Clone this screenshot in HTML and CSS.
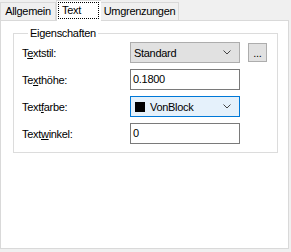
FILE: index.html
```html
<!DOCTYPE html>
<html lang="de">
<head>
    <meta charset="UTF-8">
    <title>Text Eigenschaften</title>
    <link rel="stylesheet" href="styles.css">
</head>
<body>
    <div class="tabs">
        <div class="tab tab-general">Allgemein</div>
        <div class="tab tab-text active"><span class="focus">Text</span></div>
        <div class="tab tab-border">Umgrenzungen</div>
    </div>
    <div class="panel">
        <fieldset class="group">
            <legend>Eigenschaften</legend>
            <div class="rows">
                <label>T<u>e</u>xtstil:</label>
                <div class="combo">
                    <span class="value">Standard</span>
                    <svg class="chevron" width="8" height="5" viewBox="0 0 8 5"><polyline points="0.5,0.5 4,4 7.5,0.5" fill="none" stroke="#444" stroke-width="1"/></svg>
                </div>
                <div class="dots">...</div>

                <label>Te<u>x</u>thöhe:</label>
                <div class="input">0.1800</div>
                <div></div>

                <label>Text<u>f</u>arbe:</label>
                <div class="combo combo-focus">
                    <span class="swatch"></span>
                    <span class="value">VonBlock</span>
                    <svg class="chevron" width="8" height="5" viewBox="0 0 8 5"><polyline points="0.5,0.5 4,4 7.5,0.5" fill="none" stroke="#444" stroke-width="1"/></svg>
                </div>
                <div></div>

                <label>Text<u>w</u>inkel:</label>
                <div class="input">0</div>
                <div></div>
            </div>
        </fieldset>
    </div>
</body>
</html>
```

FILE: styles.css
```css
body {
    margin: 0;
    width: 291px;
    height: 252px;
    background: #f0f0f0;
    font-family: "Liberation Sans", Arial, sans-serif;
    font-size: 11px;
    letter-spacing: -0.3px;
    color: #000;
}
.tabs {
    display: flex;
    align-items: flex-end;
    height: 20px;
}
.tab {
    box-sizing: border-box;
    height: 18px;
    border: 1px solid #d9d9d9;
    border-bottom: none;
    background: #f0f0f0;
    text-align: center;
    line-height: 16px;
}
.tab-general {
    width: 56px;
}
.tab-text {
    width: 45px;
}
.tab-border {
    width: 78px;
    border-left: none;
}
.tab.active {
    position: relative;
    z-index: 1;
    height: 21px;
    margin-bottom: -1px;
    background: #fff;
    border-right: none;
    padding: 1px 2px 0 1px;
    text-align: left;
}
.focus {
    display: block;
    box-sizing: border-box;
    height: 17px;
    border: 1px dotted #000;
    padding-left: 3px;
    line-height: 14px;
}
.panel {
    box-sizing: border-box;
    width: 289px;
    height: 229px;
    background: #fff;
    border: 1px solid #d9d9d9;
    padding-top: 6px;
}
.group {
    box-sizing: border-box;
    width: 265px;
    margin: 0 0 0 12px;
    padding: 2px 0 8px 8px;
    border: 1px solid #dcdcdc;
}
.group legend {
    margin-left: 6px;
    padding: 0 2px;
    line-height: 13px;
}
.rows {
    display: grid;
    grid-template-columns: 108px 110px 28px;
    grid-auto-rows: 21px;
    row-gap: 6px;
    align-items: center;
}
.rows label {
    padding-top: 1px;
}
.combo {
    box-sizing: border-box;
    height: 21px;
    display: flex;
    align-items: center;
    padding: 0 8px 0 3px;
    background: #e1e1e1;
    border: 1px solid #adadad;
}
.combo .value {
    flex: 1;
}
.combo-focus {
    background: #e5f1fb;
    border-color: #0078d7;
    padding-left: 4px;
}
.swatch {
    width: 10px;
    height: 10px;
    background: #000;
    margin-right: 5px;
}
.dots {
    box-sizing: border-box;
    width: 19px;
    height: 19px;
    margin-left: 8px;
    background: #e1e1e1;
    border: 1px solid #adadad;
    text-align: center;
    line-height: 19px;
}
.input {
    box-sizing: border-box;
    height: 21px;
    border: 1px solid #7a7a7a;
    background: #fff;
    padding-left: 2px;
    line-height: 19px;
}
```
